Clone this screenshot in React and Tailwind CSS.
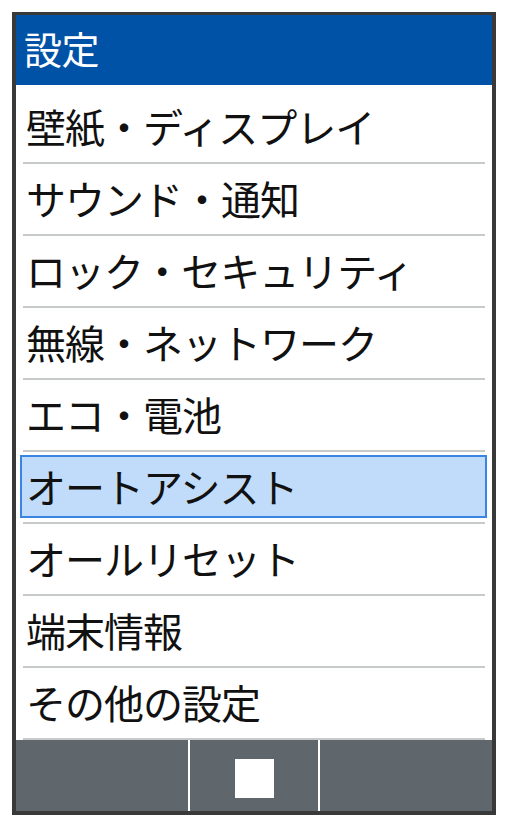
const items = [
  "壁紙・ディスプレイ",
  "サウンド・通知",
  "ロック・セキュリティ",
  "無線・ネットワーク",
  "エコ・電池",
  "オートアシスト",
  "オールリセット",
  "端末情報",
  "その他の設定",
];

const selected = 5;

export default function App() {
  return (
    <div
      className="w-[507px] h-[826px] bg-white pt-[12px] pl-[12px]"
      style={{ fontFamily: '"Noto Sans CJK JP", "Noto Sans", sans-serif' }}
    >
      <div className="w-[484px] h-[803px] border-[4px] border-t-[3px] border-[#393939] flex flex-col bg-white">
        {/* Header */}
        <div className="h-[70px] bg-[#0052a6] flex items-center pl-[8px] pb-[5px]">
          <span className="text-white text-[38px] leading-none tracking-[-0.5px]">設定</span>
        </div>

        {/* Menu list */}
        <div className="flex-1 flex flex-col pt-[7px]">
          {items.map((label, i) => (
            <div key={label} className="h-[72px] flex flex-col">
              <div className="h-[70px] flex flex-col">
                {i === selected ? (
                  <div className="mt-[3px] ml-[4px] mr-[5px] h-[63px] bg-[#c0dcfa] border-[2px] border-[#3a84e2] flex items-center pl-[4px] pb-[2px]">
                    <span className="text-[40px] leading-none tracking-[-1px] text-[#111]">{label}</span>
                  </div>
                ) : (
                  <div className="h-full flex items-center pl-[10px] pb-[2px]">
                    <span className="text-[40px] leading-none tracking-[-1px] text-[#111]">{label}</span>
                  </div>
                )}
              </div>
              <div className="h-[2px] mx-[7px] bg-[#c6caca]" />
            </div>
          ))}
        </div>

        {/* Soft key bar */}
        <div className="h-[71px] flex bg-[#5f676d]">
          <div className="w-[172px]" />
          <div className="w-[2px] bg-white" />
          <div className="w-[128px] flex justify-center pt-[19px]">
            <div className="w-[39px] h-[39px] bg-white" />
          </div>
          <div className="w-[2px] bg-white" />
          <div className="flex-1" />
        </div>
      </div>
    </div>
  );
}
